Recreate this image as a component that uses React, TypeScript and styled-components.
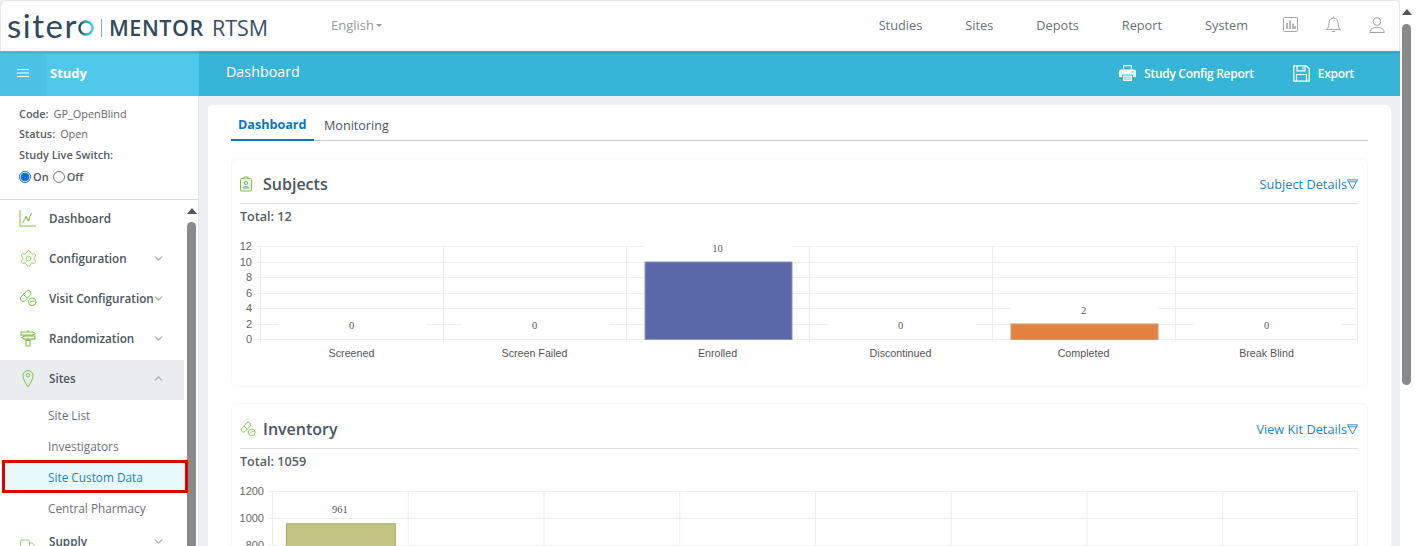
import React from "react";
import styled, { createGlobalStyle } from "styled-components";
import { ChevronDown, ChevronUp, Settings, Truck } from "lucide-react";

const Global = createGlobalStyle`
  html, body { margin: 0; padding: 0; height: 100%; overflow: hidden; background: #fff; }
  * { box-sizing: border-box; }
  body { font-family: "Open Sans", "Noto Sans", sans-serif; color: #4a5560; }
`;

const Shell = styled.div`
  display: flex; width: 1419px; height: 546px; overflow: hidden; background: #fff;
`;
const Page = styled.div`
  width: 1400px; height: 546px; display: flex; flex-direction: column; overflow: hidden;
  background: #eef0f5; flex: none;
`;
const WinScroll = styled.div`
  width: 19px; flex: none; display: flex; flex-direction: column; align-items: flex-start; background: #fff; padding: 9px 0 0 2px;
`;
const UpArrow = styled.div`
  width: 0; height: 0; border-left: 5px solid transparent; border-right: 5px solid transparent;
  border-bottom: 6px solid ${p => p.color || "#555"};
`;
const WinThumb = styled.div`
  width: 9px; height: 361px; margin-top: 9px; border-radius: 5px; background: #8a8a8a;
`;

const Header = styled.header`
  height: 51px; flex: none; background: #fff; display: flex; align-items: center; padding: 0 15px 0 8px;
  border-radius: 6px 6px 0 0; box-shadow: inset 1px 1px 0 #e8e8e8, inset -1px 0 0 #e8e8e8;
`;
const Logo = styled.div`display: flex; align-items: center; width: 323px; color: #2f4a60; margin-top: 4px;`;
const LogoWord = styled.span`
  font-family: "Lato", sans-serif; font-size: 33px; letter-spacing: 1.5px; line-height: 1; color: #2f4a60; font-weight: 400; margin: -4px 0 0 -1px;
`;
const LogoO = styled.svg`flex: none; margin-left: -1px;`;
const LogoDivider = styled.span`width: 1px; height: 18px; background: #9aa6b0; margin: 0 7px 0 6px;`;
const LogoMentor = styled.span`
  font-family: "Open Sans", sans-serif; font-weight: 600; font-size: 21.5px; letter-spacing: 0.6px; margin-right: 8px; color: #33495d; line-height: 1;
`;
const LogoRtsm = styled.span`font-family: "Open Sans", sans-serif; font-weight: 400; font-size: 21.5px; color: #3b5064; line-height: 1;`;
const Lang = styled.div`
  font-size: 13px; color: #9a9a9a; display: flex; align-items: center; gap: 2px; margin-top: -2px;
`;
const Caret = styled.span`
  width: 0; height: 0; border-left: 3px solid transparent; border-right: 3px solid transparent; border-top: 3px solid #9a9a9a; margin-top: 2px;
`;
const TopNav = styled.nav`
  margin-left: auto; display: flex; align-items: center; gap: 43px; font-size: 12.75px; color: #687078; margin-top: -2px;
`;
const TopIcons = styled.div`display: flex; align-items: center; gap: 28px; margin-left: 35px; color: #a5a5a5; margin-top: -2px;`;

const BlueRow = styled.div`display: flex; height: 45px; flex: none;`;
const StudyHead = styled.div`
  width: 199px; flex: none; background: #50c8ea; display: flex; align-items: center; color: #fff; height: 45px;
  border-top: 3px solid #3fb8dc;
`;
const Burger = styled.div`
  width: 46px; height: 100%; background: #4cc3e6; display: flex; align-items: center; justify-content: center; padding-bottom: 4px;
`;
const StudyLabel = styled.span`font-size: 13px; font-weight: 700; margin-left: 4px; padding-bottom: 4px;`;
const TitleBar = styled.div`
  flex: 1; background: #36b5d8; color: #fff; display: flex; align-items: center; padding: 0 46px 4px 27px; height: 45px;
  border-top: 3px solid #2eaacd;
`;
const PageTitle = styled.div`font-size: 14.3px; margin-top: -3px;`;
const BarActions = styled.div`margin-left: auto; display: flex; align-items: center; gap: 39px;`;
const BarAction = styled.div`
  display: flex; align-items: center; gap: 8px; font-size: 12px; font-weight: 600; color: #fff; letter-spacing: -0.3px;
`;

const Body = styled.div`flex: 1; display: flex; min-height: 0;`;
const Side = styled.aside`
  width: 199px; flex: none; background: #fff; display: flex; flex-direction: column; border-right: 1px solid #e4e6ea;
`;
const StudyInfo = styled.div`
  height: 104px; flex: none; padding: 10px 0 0 19px; border-bottom: 1px solid #dcdcdc; font-size: 10.9px; color: #666;
  display: flex; flex-direction: column; gap: 5.4px;
`;
const InfoLine = styled.div`line-height: 15px; height: 15px;`;
const InfoKey = styled.b`font-weight: 600; color: #555c63; margin-right: 5px;`;
const RadioRow = styled.div`display: flex; align-items: center; font-size: 11px; font-weight: 600; color: #555c63; margin-top: 2px; gap: 2px;`;
const Radio = styled.span`
  width: 12px; height: 12px; border-radius: 50%; border: 1px solid ${p => (p.$on ? "#0a6fd0" : "#767676")}; display: inline-block;
  background: ${p => (p.$on ? "radial-gradient(circle, #0a6fd0 0 4px, #fff 4.6px)" : "#fff")};
`;
const RadioText = styled.span`margin-right: 2px;`;
const SideBody = styled.div`flex: 1; display: flex; min-height: 0; overflow: hidden;`;
const NavList = styled.div`width: 184px; flex: none; display: flex; flex-direction: column;`;
const NavItem = styled.div`
  height: 40px; flex: none; display: flex; align-items: center; padding: 0 0 4px 19px; background: ${p => (p.$active ? "#eaedf0" : "transparent")};
  font-size: 11.7px; font-weight: 600; color: #4a5560; position: relative;
`;
const NavIcon = styled.span`width: 30px; flex: none; display: flex; align-items: center; margin-top: ${p => p.$drop || 0}px;`;
const NavChevron = styled.span`position: absolute; right: 19px; top: 12px; color: #a9adb2; display: flex;`;
const SubItem = styled.div`
  height: 31px; flex: none; display: flex; align-items: center; padding-left: 48px; font-size: 11.8px; color: ${p => (p.$sel ? "#1b7fc4" : "#6a7178")};
  background: ${p => (p.$sel ? "#e8f9fe" : "transparent")}; white-space: nowrap;
  position: relative; z-index: 2; width: ${p => (p.$sel ? "184px" : "auto")};
  margin-left: ${p => (p.$sel ? "3px" : "0")};
  ${p => p.$sel && "padding-left: 45px; outline: 3px solid #e00000; outline-offset: -2px;"}
`;
const SubList = styled.div`display: flex; flex-direction: column; margin-top: -1px;`;
const SideScroll = styled.div`
  width: 14px; flex: none; display: flex; flex-direction: column; align-items: flex-start; padding: 8px 0 0 3px;
`;
const SideThumb = styled.div`flex: 1; width: 9px; margin-top: 8px; border-radius: 5px 5px 0 0; background: #8a8a8a;`;

const Content = styled.main`flex: 1; padding: 9px 9px 0 9px; min-width: 0; overflow: hidden;`;
const Card = styled.div`background: #fff; border-radius: 5px 5px 0 0; padding: 0 23px; height: 600px;`;
const Tabs = styled.div`display: flex; height: 36px; border-bottom: 1px solid #c9c9c9; align-items: flex-end;`;
const Tab = styled.div`
  height: 28px; margin-bottom: -1px; font-size: 12.6px; display: flex; align-items: center; margin-right: 2px;
  padding: ${p => (p.$on ? "0 8px 4px 7px" : "0 8px 2px")};
  font-weight: ${p => (p.$on ? 700 : 400)}; color: ${p => (p.$on ? "#0a75bd" : "#4a5560")};
  border-bottom: 2px solid ${p => (p.$on ? "#0a75bd" : "transparent")};
  width: ${p => (p.$on ? "83px" : "auto")};
`;
const Panel = styled.section`
  border: 1px solid #f6f6f6; border-radius: 6px; padding: 0 9px 0 8px; margin-top: ${p => p.$gap}px; height: ${p => p.$h}px;
`;
const PanelHead = styled.div`
  height: 45px; display: flex; align-items: center; border-bottom: 1px solid #dfe1e6; padding-top: 6px;
`;
const PanelIcon = styled.span`width: 23px; display: flex; align-items: center; flex: none;`;
const PanelTitle = styled.h2`margin: 0; font-size: 16px; font-weight: 600; color: #4a5560;`;
const PanelLink = styled.a`
  margin-left: auto; font-size: 12.75px; color: #1b7fc4; display: flex; align-items: center;
`;
const Total = styled.div`font-size: 12.6px; font-weight: 600; color: #555c63; margin-top: 4px; height: 18px; line-height: 18px;`;
const ChartSvg = styled.svg`display: block; margin-top: 8px;`;

type Bar = { label: string; value: number; color: string; stroke: string };

function Chart(props: { width: number; height: number; left: number; top: number; plotH: number; max: number; step: number; cats: Bar[]; barW: number; showCat: boolean; tickFont: number }) {
  const { width, height, left, top, plotH, max, step, cats, barW, showCat, tickFont } = props;
  const cw = (width - left) / cats.length;
  const y = (v: number) => top + plotH - (v / max) * plotH;
  const ticks: number[] = [];
  for (let v = 0; v <= max; v += step) ticks.push(v);
  return (
    <ChartSvg width={width} height={height} viewBox={`0 0 ${width} ${height}`}>
      {ticks.map(t => (
        <g key={t}>
          <line x1={left - 4} x2={width} y1={Math.round(y(t)) + 0.5} y2={Math.round(y(t)) + 0.5} stroke="#efefef" />
          <text x={left - 8} y={y(t) + 4} textAnchor="end" fontFamily="Liberation Sans" fontSize={tickFont} fill="#666">{t}</text>
        </g>
      ))}
      {cats.map((_, i) => (
        <line key={i} x1={left + i * cw + 0.5} x2={left + i * cw + 0.5} y1={top} y2={top + plotH + 3} stroke="#ededed" />
      ))}
      <line x1={width - 0.5} x2={width - 0.5} y1={top} y2={top + plotH + 3} stroke="#ededed" />
      {cats.map((c, i) => {
        const cx = left + i * cw + cw / 2;
        const by = y(c.value);
        const labelled = c.label !== "";
        return (
          <g key={i}>
            {labelled ? <rect x={cx - barW / 2 + 1} y={by - 21} width={barW} height={12} fill="#fff" /> : null}
            {c.value > 0 ? <rect x={cx - barW / 2 + 1.5} y={by + 0.5} width={barW - 1} height={top + plotH - by} fill={c.color} stroke={c.stroke} /> : null}
            {labelled ? <text x={cx} y={by - 10} textAnchor="middle" fontFamily="Liberation Serif" fontSize={10.5} fill="#555">{c.value}</text> : null}
            {showCat ? <text x={cx} y={top + plotH + 18} textAnchor="middle" fontFamily="Liberation Sans" fontSize={10.7} fill="#555">{c.label}</text> : null}
          </g>
        );
      })}
    </ChartSvg>
  );
}

const green = "#7cc243";

const ChartLineIcon = () => (
  <svg width="18" height="18" viewBox="0 0 18 18" fill="none" stroke={green} strokeWidth="1"><path d="M1 1v16h16" /><path d="M3.500 14 7 8.500l2.500 2.500 3-7" /><circle cx="7" cy="8.500" r=".8" fill={green} /><circle cx="9.500" cy="11" r=".8" fill={green} /></svg>
);
const PillIcon = ({ s = 18 }: { s?: number }) => (
  <svg width={s} height={s} viewBox="0 0 18 18" fill="none" stroke={green} strokeWidth="1">
    <path d="M1.700 8.500 7.500 2.200a2.700 2.700 0 0 1 3.900 3.700L5.600 12a2.700 2.700 0 0 1-3.900-3.500Z" /><path d="m4.600 5.600 3.800 3.600" />
    <circle cx="13.200" cy="12.800" r="3.800" /><path d="M10.800 13.600c1.500-1.400 3-1.600 4.800-1.600" />
  </svg>
);
const SignIcon = () => (
  <svg width="18" height="18" viewBox="0 0 18 18" fill="none" stroke={green} strokeWidth="1.100">
    <path d="M9 1v2M9 9.500v2" /><path d="M2 3h12l2.200 1.500-2.200 1.600H2Z" /><path d="M16 7H5.500L3 8.600l2.500 1.500H16Z" /><path d="M7 11.500h4V17H7Z" />
  </svg>
);
const PinIcon = () => (
  <svg width="18" height="20" viewBox="0 0 18 20" fill="none" stroke={green} strokeWidth="1"><path d="M9 19C6.500 15 4 11.500 4 7.500a5 5 0 0 1 10 0C14 11.500 11.500 15 9 19Z" /><circle cx="9" cy="7.200" r="1.800" /></svg>
);
const BadgeIcon = () => (
  <svg width="14" height="16" viewBox="1 0 14 16" fill="#eef7e4" stroke={green} strokeWidth="1"><rect x="1.500" y="2.500" width="11" height="12.500" rx="1" /><path d="M5 2.500V1h4v1.500" /><circle cx="7" cy="7" r="1.600" fill="none" stroke="#7aa" /><path d="M4 12c.5-2 5.500-2 6 0Z" fill="none" stroke="#7aa" /></svg>
);
const Funnel = () => (
  <svg width="11" height="11" viewBox="0 0 11 11" fill="none" stroke="#1b7fc4" strokeWidth=".9"><path d="M.5 .8h10L5.500 10Z" /><path d="M2 2.800h7" /></svg>
);
const Printer = () => (
  <svg width="17" height="16" viewBox="0 0 17 16" fill="#fff"><path d="M4.600 3.800V.7h7.800v3.100" fill="none" stroke="#fff" strokeWidth="1.200" /><path fillRule="evenodd" d="M2 4.500h13a2 2 0 0 1 2 2v5.500h-3V9.500H3V12H0V6.500a2 2 0 0 1 2-2Zm11.500 1.700a.8.8 0 1 0 0 1.600.8.8 0 0 0 0-1.600Z" /><path d="M4 10.500h9V16H4Zm1 1.300v.8h7v-.8Zm0 2v.8h7v-.8Z" fillRule="evenodd" /></svg>
);
const Floppy = () => (
  <svg width="17" height="17" viewBox="0 0 17 17" fill="none" stroke="#fff" strokeWidth="1.200"><path d="M.8.8h12.400l3 3v12.400H.8Z" /><path d="M4 .8v5h8v-5M10 2.200v2.200" /><path d="M3.500 16.200V9.500h10v6.700" /></svg>
);
const ChartBox = () => (
  <svg width="15" height="15" viewBox="0 0 15 15" fill="none" stroke="#a5a5a5"><rect x=".5" y=".5" width="14" height="14" rx="1" /><path d="M4 12V6M7 12V3.500M10 12V6.500M12 12V9" strokeWidth="1.600" /></svg>
);
const BellIcon = () => (
  <svg width="15" height="17" viewBox="0 0 15 17" fill="none" stroke="#a5a5a5"><path d="M7.500 2a4.500 4.500 0 0 0-4.500 4.500c0 4-1 5.500-2.500 7h14c-1.500-1.500-2.500-3-2.500-7A4.500 4.500 0 0 0 7.500 2ZM7.500 2V.5M5.800 15.500h3.400" /></svg>
);
const UserIcon = () => (
  <svg width="16" height="16" viewBox="0 0 16 16" fill="none" stroke="#a5a5a5"><circle cx="8" cy="4.500" r="3.800" /><path d="M.7 15.500c0-7 14.600-7 14.600 0Z" /></svg>
);
const BurgerIcon = () => (
  <svg width="12" height="8" viewBox="0 0 12 8" stroke="#fff"><path d="M0 .5h12M0 4h12M0 7.500h12" /></svg>
);

const none = { color: "", stroke: "" };
const subjects: Bar[] = [
  { label: "Screened", value: 0, ...none },
  { label: "Screen Failed", value: 0, ...none },
  { label: "Enrolled", value: 10, color: "#5b68aa", stroke: "#8a93bf" },
  { label: "Discontinued", value: 0, ...none },
  { label: "Completed", value: 2, color: "#e2843f", stroke: "#cf9b72" },
  { label: "Break Blind", value: 0, ...none },
];
const inventory: Bar[] = [
  { label: "Available", value: 961, color: "#c3c382", stroke: "#a9a96e" },
  ...Array.from({ length: 7 }, () => ({ label: "", value: 0, ...none })),
];

export default function App() {
  return (
    <>
      <Global />
      <Shell>
        <Page>
          <Header>
            <Logo>
              <LogoWord>siter</LogoWord>
              <LogoO width="18" height="18" viewBox="0 0 18 18" fill="none" strokeWidth="2.600">
                <defs><linearGradient id="g" x1="0" x2="1"><stop offset="0" stopColor="#2f4a60" /><stop offset=".5" stopColor="#2fa6b8" /><stop offset="1" stopColor="#4fd0d8" /></linearGradient></defs>
                <circle cx="9" cy="9" r="6.500" stroke="url(#g)" />
              </LogoO>
              <LogoDivider />
              <LogoMentor>MENTOR</LogoMentor>
              <LogoRtsm>RTSM</LogoRtsm>
            </Logo>
            <Lang>English<Caret /></Lang>
            <TopNav>
              <span>Studies</span><span>Sites</span><span>Depots</span><span>Report</span><span>System</span>
            </TopNav>
            <TopIcons><ChartBox /><BellIcon /><UserIcon /></TopIcons>
          </Header>
          <BlueRow>
            <StudyHead>
              <Burger><BurgerIcon /></Burger>
              <StudyLabel>Study</StudyLabel>
            </StudyHead>
            <TitleBar>
              <PageTitle>Dashboard</PageTitle>
              <BarActions>
                <BarAction><Printer />Study Config Report</BarAction>
                <BarAction><Floppy />Export</BarAction>
              </BarActions>
            </TitleBar>
          </BlueRow>
          <Body>
            <Side>
              <StudyInfo>
                <InfoLine><InfoKey>Code:</InfoKey>GP_OpenBlind</InfoLine>
                <InfoLine><InfoKey>Status:</InfoKey>Open</InfoLine>
                <InfoLine><InfoKey>Study Live Switch:</InfoKey></InfoLine>
                <RadioRow><Radio $on /><RadioText>On</RadioText><Radio /><RadioText>Off</RadioText></RadioRow>
              </StudyInfo>
              <SideBody>
                <NavList>
                  <NavItem><NavIcon><ChartLineIcon /></NavIcon>Dashboard</NavItem>
                  <NavItem><NavIcon><Settings size={19} color={green} strokeWidth={1} /></NavIcon>Configuration<NavChevron><ChevronDown size={13} strokeWidth={2.500} /></NavChevron></NavItem>
                  <NavItem><NavIcon><PillIcon /></NavIcon>Visit Configuration<NavChevron><ChevronDown size={13} strokeWidth={2.500} /></NavChevron></NavItem>
                  <NavItem><NavIcon><SignIcon /></NavIcon>Randomization<NavChevron><ChevronDown size={13} strokeWidth={2.500} /></NavChevron></NavItem>
                  <NavItem $active><NavIcon><PinIcon /></NavIcon>Sites<NavChevron><ChevronUp size={13} strokeWidth={2.500} /></NavChevron></NavItem>
                  <SubList>
                    <SubItem>Site List</SubItem>
                    <SubItem>Investigators</SubItem>
                    <SubItem $sel>Site Custom Data</SubItem>
                    <SubItem>Central Pharmacy</SubItem>
                  </SubList>
                  <NavItem><NavIcon $drop={10}><Truck size={18} color={green} strokeWidth={1} /></NavIcon>Supply<NavChevron><ChevronDown size={13} strokeWidth={2.500} /></NavChevron></NavItem>
                </NavList>
                <SideScroll>
                  <UpArrow color="#555" />
                  <SideThumb />
                </SideScroll>
              </SideBody>
            </Side>
            <Content>
              <Card>
                <Tabs>
                  <Tab $on>Dashboard</Tab>
                  <Tab>Monitoring</Tab>
                </Tabs>
                <Panel $h={229} $gap={17}>
                  <PanelHead>
                    <PanelIcon><BadgeIcon /></PanelIcon>
                    <PanelTitle>Subjects</PanelTitle>
                    <PanelLink>Subject Details<Funnel /></PanelLink>
                  </PanelHead>
                  <Total>Total: 12</Total>
                  <Chart width={1118} height={130} left={20} top={12} plotH={93} max={12} step={2} cats={subjects} barW={148} showCat tickFont={11} />
                </Panel>
                <Panel $h={300} $gap={16}>
                  <PanelHead>
                    <PanelIcon><PillIcon s={16} /></PanelIcon>
                    <PanelTitle>Inventory</PanelTitle>
                    <PanelLink>View Kit Details<Funnel /></PanelLink>
                  </PanelHead>
                  <Total>Total: 1059</Total>
                  <Chart width={1118} height={190} left={32} top={12} plotH={162} max={1200} step={200} cats={inventory} barW={110} showCat={false} tickFont={11} />
                </Panel>
              </Card>
            </Content>
          </Body>
        </Page>
        <WinScroll>
          <UpArrow color="#555" />
          <WinThumb />
        </WinScroll>
      </Shell>
    </>
  );
}
